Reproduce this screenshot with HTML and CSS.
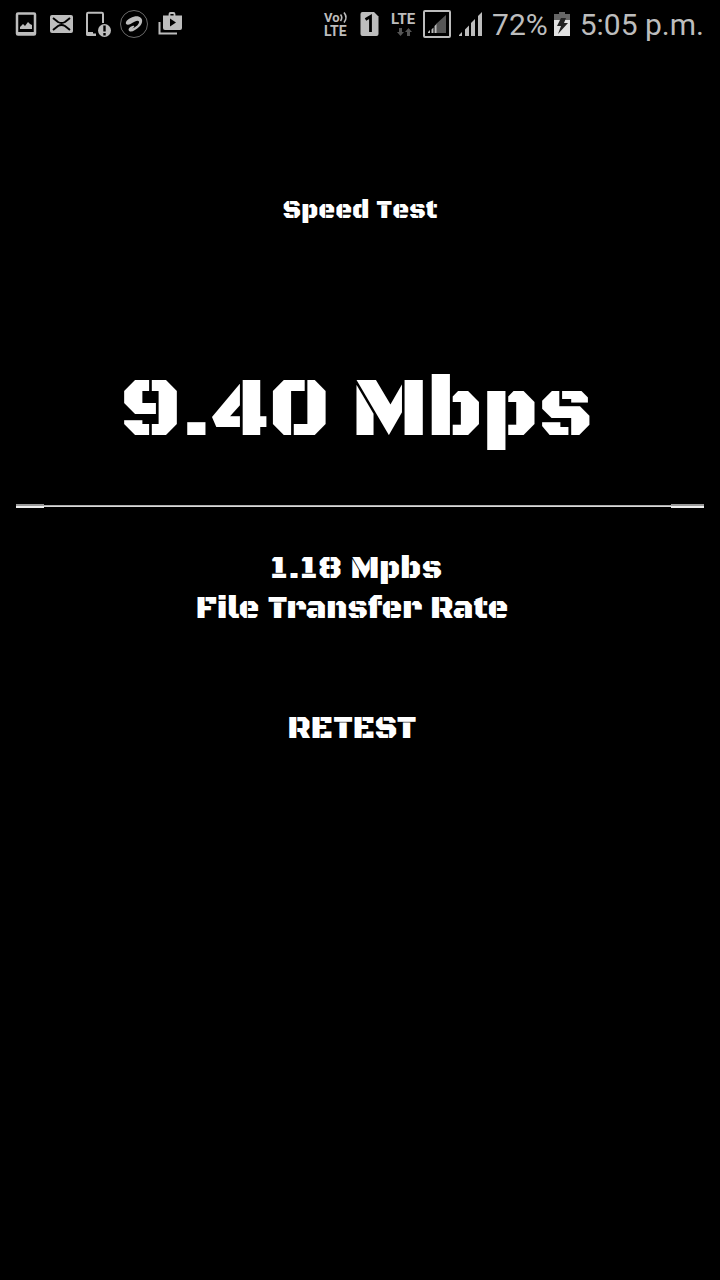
FILE: index.html
```html
<!DOCTYPE html>
<html lang="en">

<head>
    <meta charset="UTF-8">
    <meta name="viewport" content="width=device-width, initial-scale=1.0">
    <title>Speed Test</title>
    <link rel="stylesheet" href="styles.css">
</head>

<body>
    <div class="status-bar">
        <div class="notifications">
            <!--picture-->
            <svg class="icon" viewBox="0 0 28 28">
                <rect x="5" y="3.5" width="18" height="21" rx="1" fill="none" stroke="currentColor" stroke-width="2.5" />
                <path d="M5 22h18v3H5zM8 19v-2l3-3 2 2 3-4 2 2 2 1v4z" />
            </svg>
            <!--mail-->
            <svg class="icon" viewBox="0 0 28 28">
                <rect x="2" y="5" width="23" height="18" rx="2" />
                <path d="M5 8l5 4q3.500 2 7 0l5-4M5 20l5-4q3.500-2 7 0l5 4" fill="none" stroke="#000" stroke-width="2" />
            </svg>
            <!--phone alert-->
            <svg class="icon" viewBox="0 0 28 28">
                <path d="M19 13V4q0-1.200-1.200-1.200H4.200Q3 2.800 3 4v20q0 1 1.200 1H12" fill="none" stroke="currentColor" stroke-width="2" />
                <path d="M2 22h7v1.500h3V26H4q-2 0-2-2z" />
                <circle cx="20.500" cy="20.500" r="6.500" />
                <path d="M20.500 15.500v6M20.500 23v2.500" stroke="#000" stroke-width="2.400" />
            </svg>
            <!--carrier-->
            <svg class="icon" viewBox="0 0 28 28">
                <circle cx="14" cy="14" r="13.500" fill="none" stroke="currentColor" stroke-width="0.800" opacity="0.700" />
                <path d="M6 12C8 8.500 14.500 5.500 18.500 6.500C23.500 8 23 13 19.500 16.500C16 20 12 22.300 9.500 21.300C7.300 19.800 9.500 16.800 13 15.800C15 15.800 14.500 17.500 12 18.500C16 17.500 19.800 13.500 19 11.500C17.800 9.800 14.500 11.500 10.500 14C8 15.300 5 14.800 6 12z" />
            </svg>
            <!--play store-->
            <svg class="icon" viewBox="0 0 28 28">
                <path d="M3.500 12v11.500H21" fill="none" stroke="currentColor" stroke-width="2" />
                <path d="M13.500 6V4q0-1 1-1h3q1 0 1 1v2" fill="none" stroke="currentColor" stroke-width="1.800" />
                <path d="M7 5.500h19V18q0 2-2 2H9q-2 0-2-2z" />
                <path d="M14 8.500v8l6-4z" fill="#000" />
            </svg>
        </div>

        <div class="system">
            <svg class="icon" viewBox="0 0 28 28">
                <text x="2" y="12" font-size="13">Vo</text>
                <path d="M18.500 4.500q2.500 3 0 6.500M22 2.500q4 5 0 10" fill="none" stroke="currentColor" stroke-width="1.600" />
                <text x="2" y="26" font-size="14">LTE</text>
            </svg>
            <svg class="icon" viewBox="0 0 28 28">
                <path d="M6.500 2H18l4.500 4.500V24q0 2-2 2h-14q-2 0-2-2V4q0-2 2-2z" />
                <path d="M9.500 9.500l5-3V22" fill="none" stroke="#000" stroke-width="2.800" />
            </svg>
            <svg class="icon" viewBox="0 0 28 28">
                <text x="1" y="14" font-size="15">LTE</text>
                <path d="M7 22h2v-4h3v4h2l-3.500 4zM15 22h2v4h3v-4h2l-3.500-4z" fill="#555" />
            </svg>
            <svg class="icon" viewBox="2 0 28 28">
                <rect x="2" y="1" width="26" height="26" rx="1" fill="none" stroke="currentColor" stroke-width="2" />
                <path d="M14 14l10-9v18H14z" fill="#555" />
                <path d="M6 23v-1l2-2v3zM9.500 23v-3.500l2-2V23zM12.500 23v-7l2-2v9z" />
            </svg>
            <svg class="icon" viewBox="0 0 28 28">
                <path d="M1 26v-1l3-3v4zM7 26v-6.500l4-4V26zM13 26V13l4-4v17zM20 26V6l4-4v24z" />
            </svg>
            <span class="battery-level">72%</span>
            <svg class="icon battery" viewBox="0 0 20 28">
                <path d="M0 4h5V2h6v2h5v6H0z" fill="#666" />
                <path d="M0 10h16v16H0z" fill="#e2e2e2" />
                <path d="M7 8h5l-2 5h4L4 24l3-8H3z" fill="#222" />
            </svg>
            <span class="clock">5:05 p.m.</span>
        </div>
    </div>

    <div class="container">
        <h1>Speed Test</h1>
        <p class="speed">9.40 Mbps</p>
        <hr class="divider">
        <div class="details">
            <p class="rate">1.18 Mpbs</p>
            <p>File Transfer Rate</p>
            <button class="retest">RETEST</button>
        </div>
    </div>
</body>

</html>
```
FILE: styles.css
```css
/*General*/
* {
    margin: 0;
    padding: 0;
    box-sizing: border-box;
}

body {
    background-color: #000;
    color: #fff;
    font-family: 'Black Ops One', 'DejaVu Sans', sans-serif;
}

/*Status bar*/
.status-bar {
    display: flex;
    justify-content: space-between;
    align-items: center;
    height: 48px;
    padding: 0 16px 0 12px;
    color: #bdbdbd;
    font-family: Roboto, sans-serif;
    font-size: 30px;
    white-space: nowrap;
}

.notifications {
    display: flex;
    gap: 8px;
}

.system {
    display: flex;
    align-items: center;
    gap: 6px;
}

.icon {
    width: 28px;
    height: 28px;
    fill: currentColor;
    flex-shrink: 0;
    overflow: visible;
}

.icon text {
    font-weight: 700;
}

.battery {
    width: 20px;
}

/*Main*/
.container {
    display: flex;
    flex-direction: column;
    padding: 147px 16px 0;
    text-align: center;
}

h1,
.speed,
.rate {
    font-kerning: none;
}

h1 {
    font-size: 26px;
    font-weight: 400;
    line-height: 32px;
}

.speed {
    margin-top: 136px;
    padding-right: 8px;
    font-size: 84px;
    line-height: 96px;
}

/*thin line with a thicker piece at both ends*/
.divider {
    display: flex;
    justify-content: space-between;
    align-items: center;
    height: 4px;
    margin-top: 45px;
    border: none;
    background: linear-gradient(#999, #eee) center / 100% 2px no-repeat;
}

.divider::before,
.divider::after {
    content: '';
    width: 28px;
    height: 4px;
    background: linear-gradient(#999 50%, #eee 50%);
}

.divider::after {
    width: 33px;
}

/*Details*/
.details {
    display: flex;
    flex-direction: column;
    align-items: center;
    margin-top: 41px;
    padding-right: 16px;
    font-size: 32px;
    line-height: 40px;
}

.rate {
    padding-left: 8px;
}

.retest {
    margin-top: 80px;
    border: none;
    background: none;
    color: inherit;
    font: inherit;
    cursor: pointer;
}
```
